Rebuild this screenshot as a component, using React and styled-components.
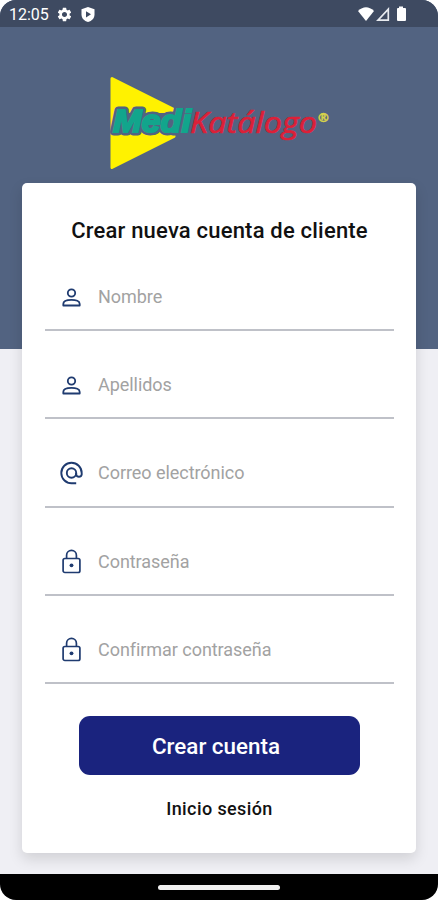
import React, { useState } from 'react';
import styled, { createGlobalStyle } from 'styled-components';
import { MdSettings } from 'react-icons/md';

const GlobalStyle = createGlobalStyle`
    * {
        box-sizing: border-box;
    }

    body {
        margin: 0;
        background: white;
        font-family: Roboto, "Liberation Sans", sans-serif;
    }
`;

const Screen = styled.div`
    display: flex;
    flex-direction: column;
    width: 438px;
    height: 900px;
    overflow: hidden;
    border-radius: 16px;
    background: linear-gradient(#526381 349px, #efeff4 349px);
`;

const StatusBar = styled.header`
    display: flex;
    justify-content: space-between;
    align-items: center;
    height: 27px;
    padding: 2px 29px 0 9px;
    background: #3e4a61;
    color: white;
`;

const StatusGroup = styled.div`
    display: flex;
    align-items: center;
    gap: ${(props) => props.$gap};
`;

const Clock = styled.span`
    width: 40px;
    font-size: 16px;
    white-space: nowrap;
`;

const Brand = styled.div`
    height: 156px;
    padding: 43px 0 0 105px;
`;

const Form = styled.form`
    display: flex;
    flex-direction: column;
    align-items: center;
    width: 394px;
    height: 670px;
    margin: 0 22px;
    padding: 0 22px 0 23px;
    border-radius: 5px;
    background: white;
    box-shadow: 0 6px 14px rgba(0, 0, 0, 0.13);
`;

const Title = styled.h1`
    margin: 35px 0 25px;
    font-size: 22px;
    font-weight: 500;
    line-height: 26px;
    letter-spacing: 0.2px;
    white-space: nowrap;
    color: #111;
`;

const Field = styled.label`
    display: flex;
    align-items: center;
    width: 100%;
    height: 88.25px;
    padding: 0 0 0 14px;
    border-bottom: 2px solid #bfc1c8;
    color: #1f3b70;

    &:first-of-type {
        height: 62px;
        padding-bottom: 5px;
    }

    &:not(:first-of-type) {
        padding-top: 21px;
    }

    svg {
        flex: none;
    }
`;

const Input = styled.input`
    flex: 1;
    min-width: 0;
    margin-left: 14px;
    padding: 0;
    border: 0;
    outline: 0;
    background: none;
    font: 400 18px Roboto, sans-serif;
    letter-spacing: -0.05px;
    color: #222;

    &::placeholder {
        color: #a2a2a2;
        opacity: 1;
    }
`;

const SubmitButton = styled.button`
    width: 281px;
    height: 59px;
    margin-top: 32px;
    padding: 0 7px 0 0;
    border: 0;
    border-radius: 11px;
    background: #1a237e;
    color: white;
    font: 500 22.4px Roboto, sans-serif;
`;

const LoginLink = styled.a`
    margin-top: 23px;
    font-size: 18px;
    font-weight: 500;
    line-height: 22px;
    letter-spacing: 0.4px;
    color: #111;
`;

const NavBar = styled.footer`
    display: flex;
    justify-content: center;
    height: 26px;
    margin-top: auto;
    padding-top: 11px;
    background: black;
`;

const NavHandle = styled.div`
    width: 122px;
    height: 5px;
    border-radius: 3px;
    background: #f0f0f0;
`;

const Logo = () => (
    <svg width="230" height="105" viewBox="105 70 230 105" role="img" aria-label="MediKatálogo">
        <path d="M112 78.5 L174 109.5 V136.5 L112 167.5 Z" fill="#fff200" stroke="#fff200" strokeWidth="3" strokeLinejoin="round" />
        <path d="M117 113 H178 V131 H112 Z" fill="#526381" />
        <text x="113" y="132" textLength="78" lengthAdjust="spacingAndGlyphs"
            fontFamily="Liberation Sans" fontWeight="700" fontStyle="italic" fontSize="32"
            fill="#526381" stroke="#526381" strokeWidth="7" strokeLinejoin="round">Medi</text>
        <text x="113" y="132" textLength="78" lengthAdjust="spacingAndGlyphs"
            fontFamily="Liberation Sans" fontWeight="700" fontStyle="italic" fontSize="32"
            fill="#12a58c" stroke="#12a58c" strokeWidth="2">Medi</text>
        <text x="190" y="132.5" textLength="127" lengthAdjust="spacingAndGlyphs"
            fontFamily="Open Sans" fontStyle="italic" fontSize="30"
            fill="#dc2038" stroke="#dc2038" strokeWidth="0.7">Katálogo</text>
        <text x="318" y="121.5" fontFamily="Open Sans" fontWeight="700" fontSize="13"
            fill="#d8d34a" stroke="#d8d34a" strokeWidth="0.5">®</text>
    </svg>
);

const ShieldIcon = () => (
    <svg width="16" height="17" viewBox="0 0 16 17">
        <path d="M8 1 L14.5 3.3 V8.5 C14.5 12 12 15 8 16 C4 15 1.5 12 1.5 8.5 V3.3 Z" fill="white" />
        <path d="M6 5.2 L11 8.3 L6 11.4 Z" fill="#3e4a61" />
    </svg>
);

const SignalIcons = () => (
    <svg width="52" height="18" viewBox="0 0 52 18">
        <path d="M1 5 Q9 -2.5 17 5 L9 15 Z" fill="white" />
        <path d="M21 14.2 H31.3 V3.2 Z" fill="none" stroke="#e8ebf0" strokeWidth="1.7" />
        <path d="M42 0.5 H46 V2 H48 Q49 2 49 3 V14 Q49 15 48 15 H41 Q40 15 40 14 V3 Q40 2 41 2 H42 Z" fill="white" />
    </svg>
);

const PersonIcon = () => (
    <svg width="25" height="26" viewBox="0 0 25 26" fill="none" stroke="currentColor" strokeWidth="1.8">
        <circle cx="12.5" cy="9" r="3.7" />
        <path d="M4.3 21.5 V19.9 C4.3 17.1 8 15.9 12.5 15.9 S20.7 17.1 20.7 19.9 V21.5 Z" strokeLinejoin="round" />
    </svg>
);

const AtIcon = () => (
    <svg width="25" height="26" viewBox="0 0 25 26" fill="none" stroke="currentColor" strokeWidth="1.9">
        <circle cx="12.5" cy="13" r="4.7" />
        <path d="M17.2 23.2 H12.5 A10.2 10.2 0 1 1 22.7 13 V14.5 A2.8 2.8 0 0 1 17.2 14.5 V13" />
    </svg>
);

const LockIcon = () => (
    <svg width="25" height="26" viewBox="0 0 25 26" fill="none" stroke="currentColor" strokeWidth="1.7">
        <rect x="4.1" y="10.5" width="16.8" height="14" rx="1.8" />
        <path d="M7.6 10.5 V7.3 A4.9 4.9 0 0 1 17.4 7.3 V10.5" />
        <circle cx="12.5" cy="17.3" r="1.9" fill="currentColor" stroke="none" />
    </svg>
);

const fields = [
    { name: 'nombre', placeholder: 'Nombre', icon: <PersonIcon /> },
    { name: 'apellidos', placeholder: 'Apellidos', icon: <PersonIcon /> },
    { name: 'correo', placeholder: 'Correo electrónico', icon: <AtIcon /> },
    { name: 'clave', placeholder: 'Contraseña', type: 'password', icon: <LockIcon /> },
    { name: 'confirmar', placeholder: 'Confirmar contraseña', type: 'password', icon: <LockIcon /> },
];

function App() {
    const [values, setValues] = useState({});

    const handleChange = (event) => {
        setValues({ ...values, [event.target.name]: event.target.value });
    }

    return (
        <Screen>
            <GlobalStyle />
            <StatusBar>
                <StatusGroup $gap="7px">
                    <Clock>12:05</Clock>
                    <MdSettings size={17} />
                    <ShieldIcon />
                </StatusGroup>
                <SignalIcons />
            </StatusBar>
            <Brand>
                <Logo />
            </Brand>
            <Form onSubmit={(event) => event.preventDefault()}>
                <Title>Crear nueva cuenta de cliente</Title>
                {fields.map((field) => (
                    <Field key={field.name}>
                        {field.icon}
                        <Input
                            name={field.name}
                            type={field.type || 'text'}
                            placeholder={field.placeholder}
                            value={values[field.name] || ''}
                            onChange={handleChange}
                        />
                    </Field>
                ))}
                <SubmitButton type="submit">Crear cuenta</SubmitButton>
                <LoginLink>Inicio sesión</LoginLink>
            </Form>
            <NavBar>
                <NavHandle />
            </NavBar>
        </Screen>
    );
}

export default App;
